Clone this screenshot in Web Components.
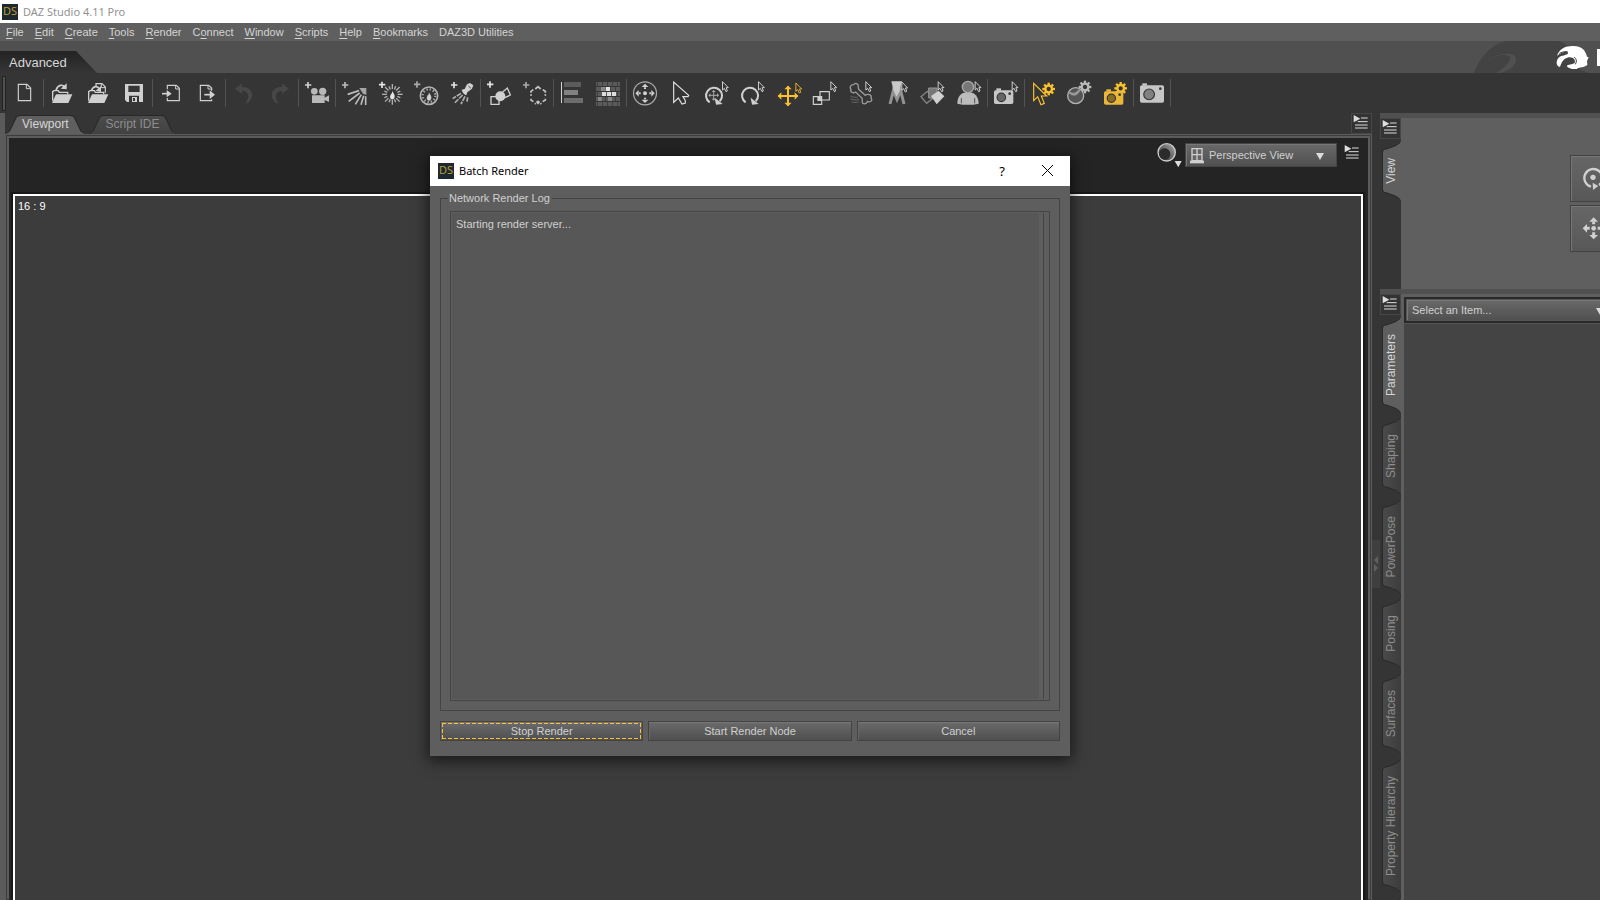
<!DOCTYPE html>
<html lang="en">
<head>
<meta charset="utf-8">
<title>DAZ Studio 4.11 Pro</title>
<style>
html,body{margin:0;height:100%;overflow:hidden;background:#353535;font-family:"Liberation Sans",Arial,sans-serif;font-size:11px;color:#d0d0d0}
</style>
</head>
<body>
<daz-studio></daz-studio>
<script>
const reset = `*{box-sizing:border-box}button,select{font:inherit;color:inherit;margin:0;padding:0;border:0;background:none;border-radius:0;outline:none}a{color:inherit;text-decoration:none}svg{display:block}`;
function define(name, css, html){
  const t = document.createElement('template');
  customElements.define(name, class extends HTMLElement{
    constructor(){
      super();
      t.innerHTML = `<style>${reset}${css}</style>` + (typeof html === 'function' ? html(this) : html);
      this.attachShadow({mode:'open'}).append(t.content.cloneNode(true));
    }
  });
}

/* ---------- toolbar icons: [viewBox x, markup], three units to a pixel ---------- */
const L = '#d0d0d0', Y = '#fbc12f';
const plus = (x,y,c=L) => `<path d="M${x-9} ${y}h19M${x} ${y-9}v19" stroke="${c}" stroke-width="5" fill="none"/>`;
const cur = (x,y,c='#e4e4e4') => `<path transform="translate(${x} ${y})" d="M1.5 0V25L7 20L12 30L16 28L12.5 18H19Z" fill="#353535" stroke="${c}" stroke-width="2.6"/>`;
const flame = (x,y,c=L) => `<path d="M${x} ${y-14}c2 8 8 10 7 18c0 5-4 8-7 8s-7-3-7-8c0-4 3-5 3-9c2 1 3 0 4-9z" fill="${c}"/>`;
const rays = (cx,cy,n,a,b,w,c) => Array.from({length:n},(_,i)=>{const t=i*2*Math.PI/n,s=Math.sin(t),k=Math.cos(t);const e=n>8&&i%2?b-5:b;return `<path d="M${cx+a*s} ${cy+a*k}L${cx+e*s} ${cy+e*k}" stroke="${c}" stroke-width="${w}"/>`}).join('');
const gear = (x,y,c) => rays(x,y,8,9,19,7,c) + `<circle cx="${x}" cy="${y}" r="10" fill="none" stroke="${c}" stroke-width="7"/>`;
const heads = (x,y,r,h,c) => `<path fill="${c}" d="M${x} ${y-r}l${h} ${h}h${-2*h}zM${x} ${y+r}l${h} ${-h}h${-2*h}zM${x-r} ${y}l${h} ${h}v${-2*h}zM${x+r} ${y}l${-h} ${h}v${-2*h}z"/>`;
const cross = (x,y,r,h,w,c) => `<path d="M${x-r+2} ${y}H${x+r-2}M${x} ${y-r+2}V${y+r-2}" stroke="${c}" stroke-width="${w}"/>` + heads(x,y,r,h,c);
const camera = (x,y,w,h,c,lens) => `<path d="M${x+7} ${y+1}v-7h14v7z" fill="${c}"/><rect x="${x}" y="${y}" width="${w}" height="${h}" rx="5" fill="${c}"/><circle cx="${x+w*0.38}" cy="${y+h*0.52}" r="${h*0.31}" fill="${lens}" stroke="#353535" stroke-width="3.5"/><circle cx="${x+w-11}" cy="${y+10}" r="4" fill="#353535"/>`;
const arc = x => `<path d="M${x-13} 97A24 24 0 1 1 ${x+17} 94" fill="none" stroke="${L}" stroke-width="6"/><path d="M${x+2} 83L${x+6} 104L${x+26} 102Z" fill="${L}"/>`;
const folder = x => `<path d="M${x+2} 92V65L${x+6} 62H${x+19}L${x+22} 67H${x+47}V72" fill="none" stroke="${L}" stroke-width="4"/><path d="M${x+12} 73H${x+61}L${x+49} 99H${x}Z" fill="${L}"/>`;
const bricks = (()=>{let s='';for(let r=0;r<5;r++)for(let c=0;c<6;c++){const x0=17+c*15-(r%2?0:8),a=Math.max(18,x0),b=Math.min(90,x0+13);if(b-a<2)continue;s+=`<rect x="${a}" y="${36+r*15}" width="${b-a}" height="12" fill="#5a5a5a"/>`}
  return s+'<rect x="47" y="51" width="13" height="12" fill="#e2e2e2"/><path d="M36 66h12v12h-12zM51 66h12v12h-12zM66 66h12v12h-12z" fill="#ddd"/><path d="M24 81h0M32 51h13v12h-13zM24 81h11v12h-11zM54 81h12v12h-12z" fill="#888"/>'})();
const ICON = {
  'New':[21,`<path d="M55 43H81L92 54V92H55Z" fill="none" stroke="${L}" stroke-width="3.5"/><path d="M79 44V56H92" fill="none" stroke="${L}" stroke-width="3"/>`],
  'Open':[132,folder(156)+`<path d="M168 60C174 44 188 42 194 52" fill="none" stroke="${L}" stroke-width="5"/><path d="M182 56L200 40V58Z" fill="${L}"/>`],
  'Merge':[240,folder(264)+`<path d="M288 50V41H306L316 51V68" fill="none" stroke="${L}" stroke-width="3.5"/><path d="M304 42V53H316" fill="none" stroke="${L}" stroke-width="3"/><path d="M274 62C280 48 292 46 298 56" fill="none" stroke="${L}" stroke-width="5"/><path d="M287 62L303 48V66Z" fill="${L}"/>`],
  'Save':[348,`<path fill-rule="evenodd" d="M375 42H429V96H381L375 90ZM385 47V66H419V47ZM387 77V96H417V77Z" fill="${L}"/><path d="M396 81h15v15h-15z" fill="${L}"/><path d="M399 84h6v9h-6z" fill="#353535"/>`],
  'Import':[459,`<path d="M502 58V46H529L538 55V92H502V84" fill="none" stroke="${L}" stroke-width="3.5"/><path d="M527 45V57H538" fill="none" stroke="${L}" stroke-width="3"/><path d="M486 71H502" stroke="${L}" stroke-width="5"/><path d="M500 60L515 71L500 82Z" fill="${L}"/>`],
  'Export':[567,`<path d="M635 62V54L626 46H601V92H635V88" fill="none" stroke="${L}" stroke-width="3.5"/><path d="M624 46V57H635" fill="none" stroke="${L}" stroke-width="3"/><path d="M613 74H631" stroke="${L}" stroke-width="5"/><path d="M629 61L645 74L629 87Z" fill="${L}"/>`],
  'Undo':[678,`<path d="M705 56L726 40V72ZM724 51C750 48 771 72 744 100H736C752 78 744 62 724 62Z" fill="#474747"/>`],
  'Redo':[786,`<path d="M867 56L846 40V72ZM848 51C822 48 801 72 828 100H836C820 78 828 62 848 62Z" fill="#474747"/>`],
  'Create camera':[27,plus(54,45)+`<g fill="#b9b9b9"><circle cx="73" cy="64" r="10"/><circle cx="98" cy="64" r="11"/><path d="M66 76h38v7l13-7v20l-13-6v9h-38z"/></g>`],
  'Create distant light':[138,plus(165,45,'#bbb')+`<path d="M208 54H229V75L219 71Z" fill="#a5a5a5"/><path d="M207 62L173 73M209 69L176 94M214 74L196 103M221 77L213 104M227 79V105" stroke="#bbb" stroke-width="5"/>`],
  'Create point light':[246,plus(276,44,'#e4e4e4')+rays(307,73,16,16,31,4,'#b0b0b0')+flame(307,76,'#e4e4e4')],
  'Create linear light':[354,plus(381,43,'#aaa')+`<circle cx="417" cy="77" r="26" fill="none" stroke="#b4b4b4" stroke-width="5"/><circle cx="417" cy="77" r="19" fill="none" stroke="#aaa" stroke-width="7" stroke-dasharray="4 5.9"/>`+flame(417,80)],
  'Create spotlight':[462,plus(492,45,'#e4e4e4')+`<path d="M515 59L524 57L531 43L540 39L550 46L546 56L532 67L529 76Q518 72 515 59Z" fill="${L}"/><path d="M535 48L543 55" stroke="#555" stroke-width="3"/><path d="M513 70L488 86M518 75L493 100M525 79L513 102M533 82L531 95" stroke="#b0b0b0" stroke-width="5" stroke-dasharray="15 3"/>`],
  'Create primitive':[573,plus(600,43,'#e4e4e4')+`<path d="M603 80h24v23h-24z" fill="none" stroke="${L}" stroke-width="4"/><path d="M638 66L652 54L661 75L645 83" fill="none" stroke="${L}" stroke-width="4"/><circle cx="631" cy="79" r="15" fill="${L}"/>`],
  'Create null':[681,plus(708,45,'#aaa')+`<path d="M736 57L744 50L752 57M723 68V64L730 59M758 59L766 64V68M723 86V90L730 95M758 95L766 90V86M744 97V103M739 98L744 94L749 98" fill="none" stroke="#c4c4c4" stroke-width="5"/><path d="M723 72V78M766 72V78M734 100L738 102M750 102L755 100" stroke="#aaa" stroke-width="5"/>`],
  'Align':[792,`<path d="M813 36h3v63h-3z" fill="${L}"/><path d="M822 36h51v15h-51z" fill="#5c5c5c"/><path d="M822 60h42v15h-42z" fill="#818181"/><path d="M822 84h57v15h-57z" fill="#6d6d6d"/>`],
  'Geometry grid':[0,bricks],
  'Universal manipulator':[111,`<circle cx="165" cy="70" r="34.5" fill="none" stroke="#aaa" stroke-width="3.5"/>`+heads(165,70,29,10,L)+`<circle cx="165" cy="70" r="6" fill="${L}"/><path d="M147 67h5v6h-5zM178 67h5v6h-5zM162 52h6v5h-6zM162 83h6v5h-6z" fill="${L}"/>`],
  'Node selection':[219,`<path d="M251 36V97L265 84L276 102L286 99V92L279 80H294L296 76Z" fill="none" stroke="#e0e0e0" stroke-width="3.5"/>`],
  'Active pose':[327,arc(372)+cross(371,76,16,6,3,'#aaa')+cur(396,35)],
  'Rotate':[435,arc(480)+cur(504,35)],
  'Translate':[543,cross(594,78,31,11,6,Y)+cur(616,39,Y)],
  'Scale':[651,`<path d="M690 65h28v25h-28zM670 80h25v23h-25z" fill="none" stroke="${L}" stroke-width="3.5"/><path d="M682 80h13v13h-13z" fill="${L}"/>`+cur(721,35)],
  'Joint editor':[759,`<path d="M791 44C796 36 806 42 805 51L806 58L826 76C834 70 846 74 843 84C850 92 840 98 833 94C826 106 814 102 817 91L816 84L797 66C790 71 779 67 783 58C777 52 783 43 791 44Z" fill="none" stroke="#999" stroke-width="4"/><path d="M781 78Q792 84 804 81M781 86Q794 92 808 88M784 96Q796 98 807 96" stroke="#5c5c5c" stroke-width="3.5" fill="none"/>`+cur(826,35)],
  'Spot render legs':[-3,`<path d="M30 102L40 62L51 88L62 62L72 102" fill="none" stroke="#929292" stroke-width="9"/><path d="M34 34H66L59 63L50 80L41 63Z" fill="#c8c8c8"/>`+cur(64,36)],
  'Surface selection':[105,`<path d="M123 80L142 64L160 84L140 100Z" fill="none" stroke="#888" stroke-width="4"/><path d="M146 54h25v30h-25z" fill="#777" stroke="#999" stroke-width="3"/><path d="M153 78L176 62L193 79L170 103Z" fill="${L}"/>`+cur(173,35)],
  'Region navigator':[213,`<path d="M232 101C232 78 244 70 252 68H276C288 72 296 84 296 101Q264 108 232 101Z" fill="#bcbcbc"/><path d="M244 84V100M284 84V100" stroke="#555" stroke-width="3"/><circle cx="264" cy="51" r="17" fill="#777" stroke="#aaa" stroke-width="4"/>`+cur(284,35)],
  'Spot render':[324,camera(342,61,58,41,'#c6c6c6','#666')+cur(395,35)],
  'Tool settings':[435,gear(506,57,Y)+`<path d="M461 40V92L473 80L483 104L493 100L484 78H500Z" fill="#353535" stroke="${Y}" stroke-width="3.5"/>`],
  'Render settings':[543,gear(615,51,'#b9b9b9')+`<circle cx="587" cy="77" r="24" fill="#555" stroke="#b4b4b4" stroke-width="4"/><path d="M566 70Q588 88 602 60L596 58Q586 74 570 65Z" fill="#999"/>`],
  'Render with settings':[651,gear(722,55,Y)+camera(672,64,58,40,'#e9b83a','#8a6d25')],
  'Render':[762,camera(780,46,72,52,'#c6c6c6','#808080')]
};

define('ds-badge',`:host{display:flex;flex:none;width:16px;height:16px;background:#1d2831;color:#c0a234;font:11px/14px "Open Sans",sans-serif;justify-content:center;overflow:hidden}`,`<span>DS</span>`);

define('title-bar',`:host{display:flex;align-items:center;height:23px;flex:none;background:#fff;color:#929292;font:11px/20px "Noto Sans",sans-serif;padding:0 2px;gap:5px}`,`<ds-badge></ds-badge><slot></slot>`);

define('menu-bar',`:host{display:block;flex:none;background:#5f5f5f}nav{display:flex;gap:11px;height:18px;padding:0 6px;line-height:18px;color:#d4d4d4}u{text-underline-offset:2px}`,
`<nav>${[['','F','ile'],['','E','dit'],['','C','reate'],['','T','ools'],['','R','ender'],['C','o','nnect'],['','W','indow'],['','S','cripts'],['','H','elp'],['','B','ookmarks'],['DAZ3D Utilities','','']].map(([a,b,c])=>`<a href="#">${a}<u>${b}</u>${c}</a>`).join('')}</nav>`);

define('brand-strip',`:host{display:flex;flex:none;justify-content:space-between;align-items:flex-end;height:32px;background:#505050;overflow:hidden}
.tab{height:22px;width:97px;padding:1px 0 0 9px;font-size:13px;line-height:21px;text-align:left;color:#d8d8d8;background:linear-gradient(#232323,#353535);clip-path:polygon(0 0,76px 0,100% 100%,0 100%)}`,
`<button class="tab">Advanced</button><svg width="126" height="32" viewBox="0 0 378 96"><path d="M0 96C16 52 52 8 96 0H257L282 14Q315 40 320 88L344 96H78C106 90 128 72 126 52C122 30 70 34 28 62C60 42 100 36 108 48C112 62 88 84 66 96Z" fill="#434343"/><path d="M249 45C256 24 272 15 296 15C322 14 335 28 339 47L344 49L339 60L340 72C330 80 316 78 308 84C298 84 290 86 278 76C282 68 294 72 302 66C306 56 296 46 280 50C268 52 262 66 258 78C244 76 246 56 256 48C268 42 282 42 282 36C280 28 260 34 249 45Z" fill="#fff"/><path d="M300 48Q312 56 304 70M256 37Q276 28 282 34" fill="none" stroke="#434343" stroke-width="3"/><path d="M369 24h9v51h-9z" fill="#fff"/></svg>`);

define('tool-button',`:host{display:block;flex:none}button{display:block;width:36px;height:40px}`,
el=>{const n=el.getAttribute('name'),[x,m]=ICON[n];return `<button aria-label="${n}" title="${n}"><svg width="36" height="40" viewBox="${x} 9 108 120">${m}</svg></button>`});

const groups=[['New'],['Open','Merge','Save'],['Import','Export'],['Undo','Redo'],['Create camera'],['Create distant light','Create point light','Create linear light','Create spotlight'],['Create primitive','Create null'],['Align','Geometry grid'],['Universal manipulator','Node selection','Active pose','Rotate','Translate','Scale','Joint editor','Spot render legs','Surface selection','Region navigator'],['Spot render'],['Tool settings','Render settings','Render with settings'],['Render']];
define('tool-strip',`:host{display:flex;flex:none;align-items:center;height:40px;background:#353535;padding-left:2px}.grip{width:4px;height:35px;border:1px solid #222;background:#505050;margin-right:1px}.g{display:flex;flex:none;border-right:1px solid #525252;height:28px;align-items:center}`,
`<div class="grip"></div>${groups.map(g=>`<div class="g">${g.map(n=>`<tool-button name="${n}"></tool-button>`).join('')}</div>`).join('')}`);

define('pane-menu',`:host{display:block;flex:none;width:21px;height:21px;border:1px solid #474747;background:#333}:host([bare]){border-color:transparent;background:none}button{display:block}`,
`<button aria-label="Pane options"><svg width="19" height="19" viewBox="0 0 57 57"><path d="M5 3L25 14L5 25Z" fill="#ddd"/><path d="M27 12h20M17 23h30M9 33h38M9 42h38" stroke="#ddd" stroke-width="3"/></svg></button>`);

define('doc-tab',`:host{display:block;flex:none}button{position:relative;display:block;height:19px;padding:0 17px;font-size:12px;line-height:19px;color:#8d8d8d;background:#282828;clip-path:polygon(0 100%,4px 86%,11px 6%,14px 0,calc(100% - 14px) 0,calc(100% - 11px) 6%,calc(100% - 4px) 86%,100% 100%)}
button::before{content:"";position:absolute;z-index:-1;inset:1px 1px 0;background:linear-gradient(#4c4c4c,#414141);clip-path:polygon(0 100%,4px 86%,11px 6%,14px 0,calc(100% - 14px) 0,calc(100% - 11px) 6%,calc(100% - 4px) 86%,100% 100%)}
button{isolation:isolate}:host([active]) button{color:#d6d6d6}:host([active]) button::before{background:#5f5f5f}`,`<button><slot></slot></button>`);

define('view-select',`:host{display:block}label{display:flex;position:relative;width:152px;height:24px;align-items:center;border:1px solid #454545;background:linear-gradient(#696969,#505050);box-shadow:inset 1px 1px #777}
:host([wide]) label{width:220px;height:22px;border-color:#555}select{appearance:none;width:100%;height:100%;padding-left:23px}:host([wide]) select{padding-left:5px}
.w{position:absolute;left:4px;top:4px}.a{position:absolute;right:12px;top:9px}:host([wide]) .a{right:21px;top:8px}:host([wide]) .w{display:none}`,
el=>`<label><svg class="w" width="14" height="16" viewBox="0 0 42 48"><path d="M6 2h30v36h-30zM21 2v36M6 20h30" fill="#666" stroke="#d0d0d0" stroke-width="4"/><path d="M0 38h42v8h-42z" fill="#d0d0d0"/></svg><select aria-label="${el.getAttribute('text')}"><option>${el.getAttribute('text')}</option></select><svg class="a" width="8" height="7"><path d="M0 0H8L4 7Z" fill="#ddd"/></svg></label>`);

define('view-port',`:host{display:flex;flex-direction:column;flex:1;min-width:0;background:#353535;border-left:5px solid #5b5b5b}
.tabs{display:flex;height:21px;align-items:flex-end;flex:none}.tabs doc-tab+doc-tab{margin-left:3px}.tabs pane-menu{margin-left:auto}
.frame{flex:1;display:flex;flex-direction:column;min-height:0;border:1px solid #5b5b5b;border-bottom:0;box-shadow:inset 0 0 0 1px #3c3c3c,inset 0 0 0 3px #5b5b5b;padding:3px 3px 0}
.in{flex:1;display:flex;flex-direction:column;background:#242424;padding:0 5px 0 4px;min-height:0}
.bar{display:flex;flex:none;height:56px;justify-content:flex-end;align-items:flex-start;padding-top:5px}.bar view-select{margin:0 5px 0 2px}
.scene{flex:1;border:2px solid #fff;border-bottom:0;outline:2px solid #181818;background:#3c3c3c;color:#fff;padding:3px;line-height:14px}`,
`<div class="tabs"><doc-tab active>Viewport</doc-tab><doc-tab>Script IDE</doc-tab><pane-menu></pane-menu></div>
<div class="frame"><div class="in"><div class="bar"><button aria-label="Draw style"><svg width="26" height="25" viewBox="0 0 78 75"><defs><linearGradient id="s" x1="1" y1="0" x2="0" y2="1"><stop offset="0" stop-color="#aaa"/><stop offset=".5" stop-color="#666"/><stop offset="1" stop-color="#222"/></linearGradient></defs><circle cx="29" cy="28" r="26" fill="url(#s)" stroke="#ccc" stroke-width="4"/><path d="M53 54h21l-10 19z" fill="#ddd"/><circle cx="23" cy="33" r="17" fill="#2b2b2b"/></svg></button><view-select text="Perspective View"></view-select><pane-menu bare></pane-menu></div><div class="scene">16 : 9</div></div></div>`);

define('side-tab',`:host{display:block;flex:none}
button{position:relative;isolation:isolate;display:block;width:19px;min-height:60px;padding:19px 0;font-size:12px;line-height:19px;color:#8e8e8e;background:#292929;transform:rotate(180deg);writing-mode:vertical-rl;
--s:polygon(0 0,1px 3px,5px 6px,13px 9px,17px 10px,100% 12px,100% calc(100% - 12px),17px calc(100% - 10px),13px calc(100% - 9px),5px calc(100% - 6px),1px calc(100% - 3px),0 100%);clip-path:var(--s)}
button::before{content:"";position:absolute;z-index:-1;inset:1px 1px 1px 0;background:linear-gradient(90deg,#3d3d3d,#4a4a4a);clip-path:var(--s)}
:host([active]) button{color:#d6d6d6}:host([active]) button::before{background:#5f5f5f}`,`<button><slot></slot></button>`);

define('side-pane',`:host{display:flex;flex:none;min-height:0;border-top:5px solid #505050;overflow:hidden}.col{display:flex;flex-direction:column;align-items:flex-end;flex:none;width:21px;background:#353535}.body{flex:1;min-width:0;background:#5f5f5f;overflow:hidden}`,
`<div class="col"><pane-menu></pane-menu><slot name="tab"></slot></div><div class="body"><slot></slot></div>`);

define('nav-cube',`:host{display:flex;flex-direction:column;gap:3px;padding:37px 0 0 169px}button{width:48px;height:47px;flex:none;border:1px solid #424242;box-shadow:inset 1px 1px #777;background:linear-gradient(#666,#585858)}`,
`<button aria-label="Orbit"><svg width="46" height="45" viewBox="0 0 138 135"><path d="M60 92A27 27 0 1 1 84 87" fill="none" stroke="${L}" stroke-width="7"/><circle cx="66" cy="64" r="8" fill="${L}"/><path d="M65 80L82 90L66 102Z" fill="${L}"/></svg></button>
<button aria-label="Pan"><svg width="46" height="45" viewBox="0 0 138 135">${heads(68,67,33,13,L)}<circle cx="68" cy="67" r="7" fill="${L}"/><path d="M68 47v8M68 79v8M48 67h8M80 67h8" stroke="${L}" stroke-width="9"/></svg></button>`);

define('param-pane',`:host{display:flex;flex-direction:column;height:100%;padding:3px 0 0 3px}.top{flex:none;height:26px;padding:2px;background:#292929}.rest{flex:1;background:#444;border-top:1px solid #555}`,
`<div class="top"><view-select wide text="Select an Item..."></view-select></div><div class="rest"></div>`);

define('split-grip',`:host{display:flex;flex:none;width:8px;padding-top:427px;background:#353535;align-items:flex-start}button{width:8px;height:48px;background:#3f3f3f}`,
`<button aria-label="Collapse pane"><svg width="8" height="48"><path d="M6 16V24L2 20ZM2 24V32L6 28Z" fill="#606060"/></svg></button>`);

define('side-dock',`:host{display:flex;flex:none;flex-direction:column;width:220px;background:#5b5b5b}.a{height:176px}.b{flex:1;flex-shrink:1}`,
`<side-pane class="a"><side-tab slot="tab" active>View</side-tab><nav-cube></nav-cube></side-pane>
<side-pane class="b"><side-tab slot="tab" active>Parameters</side-tab>${['Shaping','PowerPose','Posing','Surfaces','Property Hierarchy',''].map(t=>`<side-tab slot="tab">${t}</side-tab>`).join('')}<param-pane></param-pane></side-pane>`);

define('push-button',`:host{display:block;flex:1}button{display:block;width:100%;height:20px;line-height:16px;padding:1px;border:1px solid #434343;box-shadow:inset 0 1px #777,inset 1px 0 #666;background:linear-gradient(#6b6b6b,#4f4f4f)}span{display:block;height:16px;line-height:16px}
:host([focused]) span{--h:repeating-linear-gradient(90deg,#fbc12f 0 4px,transparent 4px 6px);--v:repeating-linear-gradient(#fbc12f 0 4px,transparent 4px 6px);background:var(--h) 0 0/100% 1px no-repeat,var(--h) 0 100%/100% 1px no-repeat,var(--v) 0 0/1px 100% no-repeat,var(--v) 100% 0/1px 100% no-repeat}`,`<button><span><slot></slot></span></button>`);

define('batch-dialog',`:host{display:flex;flex-direction:column;position:absolute;left:430px;top:156px;width:640px;height:600px;background:#5e5e5e;box-shadow:0 3px 14px 2px #0009}
header{display:flex;flex:none;height:30px;align-items:center;gap:5px;padding:0 15px 1px 8px;background:#fff;color:#000;font:11px/20px "Noto Sans",sans-serif}header button{width:16px;height:20px}.h{margin-left:auto;font-size:13px}.x{margin-left:24px}.x svg{margin:auto}
fieldset{flex:1;display:flex;flex-direction:column;margin:6px 10px 10px;padding:6px 9px 9px;border:1px solid #444;min-height:0;min-width:0}legend{padding:0 2px 0 1px;margin-left:-2px;line-height:13px}
.log{flex:1;display:flex;border:1px solid #444;padding:1px 5px 1px 1px}.t{flex:1;background:#575757;padding:4px;line-height:14px;margin-right:4px}.e{width:1px;background:#444}
footer{display:flex;gap:5px;padding:0 10px 15px}`,
`<header><ds-badge></ds-badge><span>Batch Render</span><button class="h" aria-label="Help">?</button><button class="x" aria-label="Close"><svg width="11" height="11" viewBox="0 0 11 11"><path d="M0 0L11 11M11 0L0 11" stroke="#000"/></svg></button></header>
<fieldset><legend>Network Render Log</legend><div class="log"><div class="t">Starting render server...</div><div class="e"></div></div></fieldset>
<footer><push-button focused>Stop Render</push-button><push-button>Start Render Node</push-button><push-button>Cancel</push-button></footer>`);

define('daz-studio',`:host{display:flex;flex-direction:column;height:100vh;position:relative;overflow:hidden}main{flex:1;display:flex;min-height:0}`,
`<title-bar>DAZ Studio 4.11 Pro</title-bar><menu-bar></menu-bar><brand-strip></brand-strip><tool-strip></tool-strip><main><view-port></view-port><split-grip></split-grip><side-dock></side-dock></main><batch-dialog></batch-dialog>`);
</script>
</body>
</html>
